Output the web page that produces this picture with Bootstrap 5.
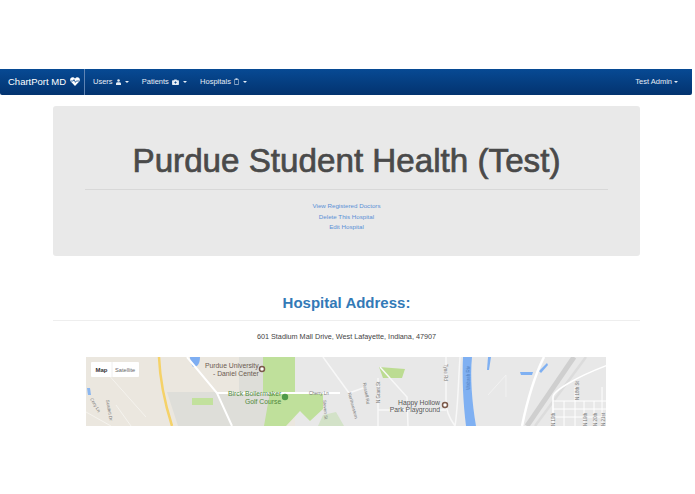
<!DOCTYPE html>
<html lang="en">
<head>
    <meta charset="UTF-8">
    <title>ChartPort MD</title>
    <meta name="viewport" content="width=device-width, initial-scale=1">
    <link href="https://cdn.jsdelivr.net/npm/bootstrap@5.3.3/dist/css/bootstrap.min.css" rel="stylesheet">
    <style>
      body { background: #fff; font-family: "Liberation Sans", Arial, sans-serif; color: #333; padding-top: 69px; height: 494px; overflow: hidden; }
      .cp-nav { width: 692px; height: 26px; padding: 0; background: linear-gradient(#074a94, #03336f); border-radius: 0 0 2px 2px; flex-wrap: nowrap; }
      .cp-brand { width: 85px; height: 26px; padding-left: 8px; color: #fff; font-size: 9.5px; line-height: 26px; border-right: 1px solid #5f84b4; white-space: nowrap; text-decoration: none; }
      .cp-link { color: #e6edf6; font-size: 7.5px; line-height: 26px; text-decoration: none; white-space: nowrap; }
      .cp-links { margin-left: 8px; gap: 13px; }
      .cp-caret { display: inline-block; width: 0; height: 0; margin-left: 2px; vertical-align: 1px; border-top: 2px solid #e6edf6; border-left: 2px solid transparent; border-right: 2px solid transparent; }
      .cp-user { margin-right: 14px; }
      .cp-ico { vertical-align: -1px; margin-left: 1px; }
      .cp-page { width: 587px; margin: 11px 0 0 53px; }
      .cp-hero { height: 150px; background: #e9e9e9; border-radius: 3px; padding: 32px 32px 0; }
      .cp-hero h1 { font-size: 33.2px; line-height: 45px; margin: 0; color: #4a4a4a; font-weight: 400; -webkit-text-stroke: .7px #4a4a4a; }
      .cp-hero hr { margin: 6px 0 11px; border-color: #d8d8d8; opacity: 1; }
      .cp-hero a { display: block; color: #5a90d6; font-size: 6.2px; line-height: 10.5px; text-decoration: none; }
      .cp-title { margin: 38px 0 0; font-size: 15px; line-height: 18px; font-weight: 700; color: #337ab7; }
      .cp-rule { margin: 8px 0 11px; border-color: #eee; opacity: 1; }
      .cp-addr { font-size: 7.25px; line-height: 10px; color: #444; margin: 0 0 15px; }
      .cp-map { display: block; width: 520px; height: 69px; margin-left: 33px; }
      .cp-map text { font-family: "Liberation Sans", Arial, sans-serif; }
    </style>
</head>
<body>

<nav class="navbar cp-nav">
  <div class="d-flex w-100 align-items-center justify-content-between">
    <div class="d-flex">
      <a class="cp-brand" href="#">ChartPort MD
        <svg class="cp-ico" width="10" height="9" viewBox="0 0 10 9"><path d="M5 9 .7 4.400C-.6 2.600.5.3 2.600.3 3.700.3 4.500.9 5 1.700 5.500.9 6.300.3 7.400.3c2.100 0 3.200 2.300 1.900 4.100z" fill="#fff"/><path d="M1 4h2.200l.8-1.400L5.400 5.400 6.300 4H9" fill="none" stroke="#0a4a92" stroke-width=".8"/></svg>
      </a>
      <div class="d-flex cp-links">
        <a class="cp-link" href="#">Users
          <svg class="cp-ico" width="5" height="6" viewBox="0 0 6 7"><circle cx="3" cy="1.700" r="1.500" fill="#e6edf6"/><path d="M0 7V5.500C0 4.300 1 3.800 3 3.800s3 .5 3 1.700V7z" fill="#e6edf6"/></svg>
          <span class="cp-caret"></span></a>
        <a class="cp-link" href="#">Patients
          <svg class="cp-ico" width="7" height="6" viewBox="0 0 8 7"><path d="M.7 1.500H2.500V.5h3v1h1.800c.4 0 .7.3.7.7v4c0 .4-.3.7-.7.7H.7C.3 6.900 0 6.600 0 6.200v-4c0-.4.3-.7.7-.7z" fill="#e6edf6"/><path d="M4 2.800v2.600M2.700 4.100h2.600" stroke="#0a4a92"/></svg>
          <span class="cp-caret"></span></a>
        <a class="cp-link" href="#">Hospitals
          <svg class="cp-ico" width="5" height="7" viewBox="0 0 6 8"><rect x=".4" y="1.400" width="5.200" height="6.200" rx=".6" fill="none" stroke="#e6edf6" stroke-width=".7"/><rect x="1.800" y=".3" width="2.400" height="1.600" fill="#e6edf6"/></svg>
          <span class="cp-caret"></span></a>
      </div>
    </div>
    <a class="cp-link cp-user" href="#">Test Admin<span class="cp-caret"></span></a>
  </div>
</nav>

<div class="cp-page text-center">
  <div class="cp-hero">
    <h1>Purdue Student Health (Test)</h1>
    <hr>
    <a href="#">View Registered Doctors</a>
    <a href="#">Delete This Hospital</a>
    <a href="#">Edit Hospital</a>
  </div>

  <h2 class="cp-title">Hospital Address:</h2>
  <hr class="cp-rule">
  <p class="cp-addr">601 Stadium Mall Drive, West Lafayette, Indiana, 47907</p>

  <svg class="cp-map" viewBox="0 0 520 69" text-anchor="start">
    <!-- ground -->
    <rect width="520" height="69" fill="#ebe7df"/>
    <rect x="209" width="311" height="69" fill="#e8e8e8"/>
    <path d="M153 0H177V35H153zM81 35H184V69H92z" fill="#dedeD9"/>
    <path d="M177 0H209V35H237V52L224 64 214 54 200 69H178L184 35H177z" fill="#bfe09b"/>
    <path d="M237 58 250 55 258 69H232z" fill="#d3e2c8"/>
    <path d="M106 41h21v7h-21z" fill="#c2e19d"/>
    <path d="M293 10 319 12 316 21H297z" fill="#bcdc92"/>
    <!-- water -->
    <path d="M104 0H114C114 6 112 10 107 10 105 7 104 3 104 0z" fill="#7eaef2"/>
    <path d="M1 31h3l1 7H2z" fill="#8ab6f0"/>
    <path d="M377 0H386C384 20 386 45 390 69H380C377 45 376 20 377 0z" fill="#7fb0f2"/>
    <path d="M402 0 405 0 403 13 401 13z" fill="#7fb0f2"/>
    <path d="M434 15H447L446 18H435zM453 14 461 6 462 8 455 16z" fill="#7fb0f2"/>
    <!-- roads -->
    <path d="M73 0C74 25 80 50 86 69" fill="none" stroke="#f5d268" stroke-width="2.500"/>
    <path d="M101 0 131 36 146 69M131 36H254" fill="none" stroke="#fff" stroke-width="2"/>
    <path d="M237 0 263 36 280 30M294 10 321 40 322 69M292 21V69M292 53H360M360 0V45C360 55 364 62 369 69M374 0C372 30 372 50 369 69" fill="none" stroke="#f8f8f8" stroke-width="1.500"/>
    <path d="M20 15 60 60M30 48 45 69M0 55 25 69" fill="none" stroke="#f5f3ee" stroke-width="1"/>
    <path d="M436 69C442 40 448 20 458 0" fill="none" stroke="#fff" stroke-width="2.500"/>
    <path d="M441 69 488 0" fill="none" stroke="#cfcfcf" stroke-width="5"/>
    <path d="M449 69 500 0" fill="none" stroke="#dcdcdc" stroke-width="2.500"/>
    <path d="M467 69V40C467 34 490 20 522 8" fill="none" stroke="#fff" stroke-width="1.500"/>
    <path d="M467 44H520M467 52H520M467 60H520M478 44V69M489 30V69M498 44V69M508 44V69M516 30V69" fill="none" stroke="#fff" stroke-width="1"/>
    <path d="M402 38 420 18V40" fill="none" stroke="#f4f4f4" stroke-width=".8"/>
    <!-- map type control -->
    <rect x="5" y="5" width="48" height="15" rx="1" fill="#fff"/>
    <line x1="26" y1="5" x2="26" y2="20" stroke="#eee"/>
    <text x="9.500" y="15" font-size="6" font-weight="700" fill="#333">Map</text>
    <text x="29" y="15" font-size="5.700" fill="#666">Satellite</text>
    <!-- labels -->
    <text x="119" y="11" font-size="6.800" fill="#6b5a50">Purdue University</text>
    <text x="127" y="19" font-size="6.800" fill="#6b5a50">- Daniel Center</text>
    <circle cx="176" cy="12" r="2.500" fill="#fff" stroke="#7b5a4a" stroke-width="1.500"/>
    <text x="142" y="39" font-size="6.800" fill="#4f8a3c">Birck Boilermaker</text>
    <text x="159" y="47" font-size="6.800" fill="#4f8a3c">Golf Course</text>
    <circle cx="199" cy="40" r="3.200" fill="#4f9a4a"/>
    <text x="223" y="38" font-size="4.500" fill="#777">Cherry Ln</text>
    <text x="354" y="47.500" font-size="6.800" fill="#555" text-anchor="end">Happy Hollow</text>
    <text x="354" y="54.500" font-size="6.800" fill="#555" text-anchor="end">Park Playground</text>
    <circle cx="359" cy="48" r="2.500" fill="#fff" stroke="#7b5a4a" stroke-width="1.500"/>
    <text font-size="4.500" fill="#4f7fc0" transform="translate(384 33) rotate(-90)">Wabash Riv</text>
    <text font-size="4.500" fill="#777" transform="translate(294 46) rotate(-90)">N Grant St</text>
    <text font-size="4.500" fill="#777" transform="translate(493 43) rotate(-90)">N 18th St</text>
    <text font-size="4.500" fill="#777" transform="translate(469 69) rotate(-90)">N 19th</text>
    <text font-size="4.500" fill="#777" transform="translate(501 69) rotate(-90)">N 19th</text>
    <text font-size="4.500" fill="#777" transform="translate(511 69) rotate(-90)">N 20th</text>
    <text font-size="4.500" fill="#777" transform="translate(519 69) rotate(-90)">N 21st</text>
    <text font-size="4.500" fill="#777" transform="translate(358 7) rotate(90)">Tyne Rd</text>
    <text font-size="4.500" fill="#777" transform="translate(237 43) rotate(85)">Steven St</text>
    <text font-size="4.500" fill="#777" transform="translate(20 43) rotate(80)">Scarlett Dr</text>
    <text font-size="4.500" fill="#777" transform="translate(277 26) rotate(80)">Russell Rd</text>
    <text font-size="4.500" fill="#777" transform="translate(4 42) rotate(60)">Cory Ln</text>
    <text font-size="4.500" fill="#777" transform="translate(262 36) rotate(75)">Northwestern</text>
  </svg>
</div>

<script src="https://cdn.jsdelivr.net/npm/bootstrap@5.3.3/dist/js/bootstrap.bundle.min.js"></script>
</body>
</html>
